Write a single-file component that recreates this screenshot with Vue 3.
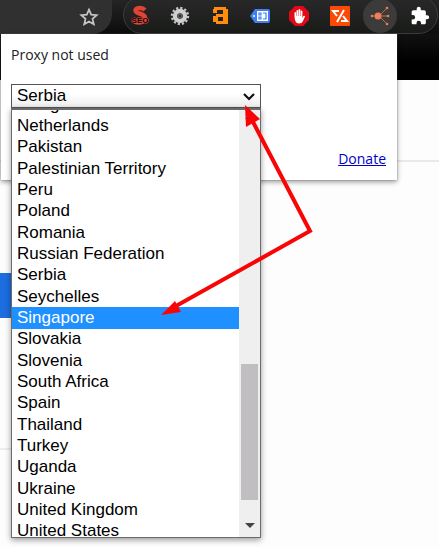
<template>
  <div class="screen">
    <header class="toolbar">
      <div class="address-bar">
        <button class="icon-btn star" aria-label="Bookmark">
          <svg width="20" height="20" viewBox="0 0 20 20">
            <path d="M10 2.6l2.2 5.1 5.5.5-4.2 3.6 1.3 5.5-4.8-2.9-4.8 2.9 1.3-5.5-4.2-3.6 5.5-.5z" fill="none" stroke="#c6c7c9" stroke-width="1.7" />
          </svg>
        </button>
      </div>
      <nav class="extensions" aria-label="Extensions">
        <button class="icon-btn" aria-label="SEO">
          <svg width="22" height="22" viewBox="0 0 22 22">
            <path d="M15 5C12 2 6 2.500 5.500 5.500C5.500 9 14.500 8 15 12.500C15 18.500 7 18.500 3.500 15.500" fill="none" stroke="#e04434" stroke-width="4.500" />
            <text x="10" y="18" text-anchor="middle" class="seo-text">SEO</text>
          </svg>
        </button>
        <button class="icon-btn" aria-label="Settings">
          <svg width="22" height="22" viewBox="0 0 22 22">
            <g stroke="#c4c4c4" fill="none">
              <circle cx="10" cy="11" r="8" stroke-width="2.400" stroke-dasharray="2.200 1.990" />
              <circle cx="10" cy="11" r="5" stroke="#cfcfcf" stroke-width="4.400" />
            </g>
            <circle cx="10" cy="11" r="2.600" fill="#5c5c5c" />
            <circle cx="10" cy="11" r="1" fill="#222" />
          </svg>
        </button>
        <button class="icon-btn" aria-label="Analytics">
          <svg width="22" height="22" viewBox="0 0 22 22">
            <path d="M4 2h12v2h2v15H6v-2H3v-6h3V9h7V5H7v3H3V4h1zM8 12v4h5v-4z" fill="#ff8c0a" fill-rule="evenodd" />
          </svg>
        </button>
        <button class="icon-btn" aria-label="Tag">
          <svg width="22" height="22" viewBox="0 0 22 22">
            <path d="M0 11l5-7h13q2 0 2 2v10q0 2-2 2H5z" fill="#3f7ff0" />
            <rect x="7" y="6" width="11" height="10" fill="#fff" />
            <path d="M9 8h2v2H9zM9 12h2v2H9zM13 8h3v6h-3" fill="none" stroke="#3f7ff0" stroke-width="1.200" />
            <circle cx="4" cy="11" r="1" fill="#fff" />
          </svg>
        </button>
        <button class="icon-btn" aria-label="Ad blocker">
          <svg width="22" height="22" viewBox="0 0 22 22">
            <path d="M6 1h8l6 6v8l-6 6H6l-6-6V7z" fill="#e20a17" />
            <path d="M5.500 12V7.500q.8-1 1.600 0V11h.4V5.500q.9-1 1.700 0V11h.4V4.500q.9-1 1.700 0V11h.4V6q.9-1 1.700 0v7l1-2q1-.8 1.700.2L14 16q-1 2.500-4 2.500T6 15z" fill="#fff" />
          </svg>
        </button>
        <button class="icon-btn" aria-label="Code">
          <svg width="22" height="22" viewBox="0 0 22 22">
            <rect x="1" y="1" width="20" height="20" rx="1" fill="#fa4a05" />
            <path d="M10 6H4l4 5M15 5L8 17M14 11l4 5h-6" fill="none" stroke="#fff" stroke-width="2" />
          </svg>
        </button>
        <button class="icon-btn active" aria-label="Proxy">
          <svg width="22" height="22" viewBox="0 0 22 22">
            <path d="M3 11h7l8-8M10 11h9M10 11l8 8" fill="none" stroke="#c66649" />
            <g fill="#f17c57">
              <circle cx="9" cy="11" r="3.500" />
              <circle cx="3" cy="11" r="1.300" />
              <circle cx="18" cy="3" r="1.300" />
              <circle cx="19" cy="11" r="1.300" />
              <circle cx="18" cy="19" r="1.300" />
            </g>
          </svg>
        </button>
        <button class="icon-btn" aria-label="All extensions">
          <svg width="20" height="20" viewBox="0 0 24 24">
            <path d="M20.500 11H19V7c0-1.100-.9-2-2-2h-4V3.500a2.500 2.500 0 0 0-5 0V5H4c-1.100 0-2 .9-2 2v3.800h1.500a2.700 2.700 0 0 1 0 5.400H2V20c0 1.100.9 2 2 2h3.800v-1.500a2.700 2.700 0 0 1 5.400 0V22H17c1.100 0 2-.9 2-2v-4h1.500a2.500 2.500 0 0 0 0-5z" fill="#fff" />
          </svg>
        </button>
      </nav>
    </header>

    <main class="page">
      <div class="banner"></div>
      <div class="subnav"></div>
      <div class="content">
        <button class="page-action" aria-label="Open"></button>
        <div class="side-panel"></div>
      </div>
    </main>

    <section class="popup">
      <label class="status" for="country">Proxy not used</label>
      <div class="picker">
        <select id="country" v-model="selected">
          <option v-for="country in countries" :key="country">{{ country }}</option>
        </select>
        <svg class="chevron" width="14" height="10" viewBox="0 0 14 10">
          <path d="M2 2l5 5 5-5" fill="none" stroke="#111" stroke-width="2.200" />
        </svg>
        <div class="dropdown">
          <ul class="options" role="listbox" aria-label="Country">
            <li v-for="country in countries" :key="country" role="presentation">
              <button
                class="option"
                :class="{ highlighted: country === hovered }"
                role="option"
                :aria-selected="country === selected"
                @mouseenter="hovered = country"
                @click="selected = country"
              >{{ country }}</button>
            </li>
          </ul>
          <div class="scrollbar">
            <span class="arrow up"></span>
            <span class="thumb"></span>
            <span class="arrow down"></span>
          </div>
        </div>
      </div>
      <a class="donate" href="#">Donate</a>
    </section>

    <!-- arrows from the select to the highlighted country -->
    <svg class="pointers" width="439" height="547" viewBox="0 0 439 547">
      <path d="M252 120L310 231L176 306" fill="none" stroke="#f90505" stroke-width="4" />
      <path d="M245 105L260 119L246 127zM161 315L175 301L181 312z" fill="#f90505" />
    </svg>
  </div>
</template>

<script setup>
import { ref } from 'vue'

const countries = [
  'Mongolia', 'Netherlands', 'Pakistan', 'Palestinian Territory', 'Peru',
  'Poland', 'Romania', 'Russian Federation', 'Serbia', 'Seychelles',
  'Singapore', 'Slovakia', 'Slovenia', 'South Africa', 'Spain', 'Thailand',
  'Turkey', 'Uganda', 'Ukraine', 'United Kingdom', 'United States'
]

const selected = ref('Serbia')
const hovered = ref('Singapore')
</script>

<style>
body {
  margin: 0;
}
</style>

<style scoped>
.screen {
  position: relative;
  min-height: 100vh;
  overflow: hidden;
  display: flex;
  flex-direction: column;
  background: #fdfdfd;
  font-family: "Liberation Sans", Arial, sans-serif;
}
button {
  border: none;
  padding: 0;
  background: none;
  font: inherit;
  cursor: pointer;
}
.toolbar {
  display: flex;
  justify-content: space-between;
  height: 34px;
  background: linear-gradient(#242424, #0c0c0c);
}
.address-bar {
  display: flex;
  justify-content: flex-end;
  width: 112px;
  background: #303030;
  border-radius: 0 0 20px 0;
}
.icon-btn {
  display: flex;
  align-items: center;
  justify-content: center;
  width: 34px;
  height: 34px;
}
.icon-btn svg {
  flex: none;
}
.star {
  margin-right: 6px;
}
.extensions {
  display: flex;
  justify-content: space-between;
  box-sizing: border-box;
  width: 315px;
  height: 38px;
  margin: -4px 1px 0 0;
  padding: 2px 0 0;
  border: 1px solid #3b3b3b;
  border-radius: 19px;
  background: linear-gradient(#292929, #191b19);
}
.active {
  border-radius: 50%;
  background: #3b3b3a;
}
.seo-text {
  font: bold 8px "Liberation Sans", sans-serif;
  fill: #080808;
  stroke: #e04434;
  stroke-width: 1px;
  paint-order: stroke;
}
.page {
  flex: 1;
  display: flex;
  flex-direction: column;
}
.banner {
  height: 46px;
  background: linear-gradient(#111, #000 60%);
}
.subnav {
  height: 80px;
  border-bottom: 2px solid #e9e8ea;
  background: #fdfdfd;
}
.content {
  flex: 1;
  padding-top: 111px;
}
.page-action {
  display: block;
  width: 180px;
  height: 45px;
  background: #1b6de0;
}
.side-panel {
  width: 180px;
  height: 130px;
  border-bottom: 2px solid #eee;
}
.popup {
  position: absolute;
  top: 34px;
  left: 1px;
  right: 42px;
  box-sizing: border-box;
  padding: 10px;
  background: #fff;
  box-shadow: 0 2px 5px rgba(0, 0, 0, 0.4), 0 0 1px #777;
}
.status {
  display: block;
  font: 14px/22px "Open Sans", "Noto Sans", sans-serif;
  color: #202124;
}
.picker {
  position: relative;
  width: 250px;
  margin-top: 18px;
}
select {
  display: block;
  appearance: none;
  width: 100%;
  height: 24px;
  padding: 0 5px;
  border: 1px solid #555;
  border-radius: 0;
  background: linear-gradient(#fff 40%, #eee);
  font: 17px/22px "Liberation Sans", Arial, sans-serif;
  color: #000;
}
.chevron {
  position: absolute;
  top: 8px;
  right: 5px;
}
.dropdown {
  position: absolute;
  top: 24px;
  left: 0;
  right: 0;
  height: 427px;
  display: flex;
  overflow: hidden;
  border: 1px solid #6b6b6b;
  border-top-width: 2px;
  background: #fff;
  box-shadow: 0 2px 6px rgba(0, 0, 0, 0.4);
}
.options {
  flex: 1;
  display: grid;
  grid-auto-rows: 1fr;
  height: 448px;
  margin: -16px 0 0;
  padding: 0;
  list-style: none;
}
.options li {
  display: flex;
  min-height: 0;
}
.option {
  flex: 1;
  padding: 0 5px;
  font-size: 17px;
  line-height: 20px;
  text-align: left;
  color: #000;
}
.highlighted {
  background: #1e90ff;
  color: #fff;
}
.scrollbar {
  display: flex;
  flex-direction: column;
  align-items: center;
  width: 21px;
  background: #f0eff0;
}
.arrow {
  border: 5px solid transparent;
}
.up {
  margin-top: 4px;
  border-top: none;
  border-bottom-color: #444;
}
.down {
  margin: auto 0 9px;
  border-bottom: none;
  border-top-color: #444;
}
.thumb {
  width: 17px;
  height: 136px;
  margin-top: 245px;
  background: #c0bec0;
}
.donate {
  display: block;
  width: max-content;
  margin: 40px 1px 0 auto;
  font: 14px/22px "Open Sans", "Noto Sans", sans-serif;
  color: #0000cc;
}
.pointers {
  position: absolute;
  top: 0;
  left: 0;
  pointer-events: none;
}
</style>
